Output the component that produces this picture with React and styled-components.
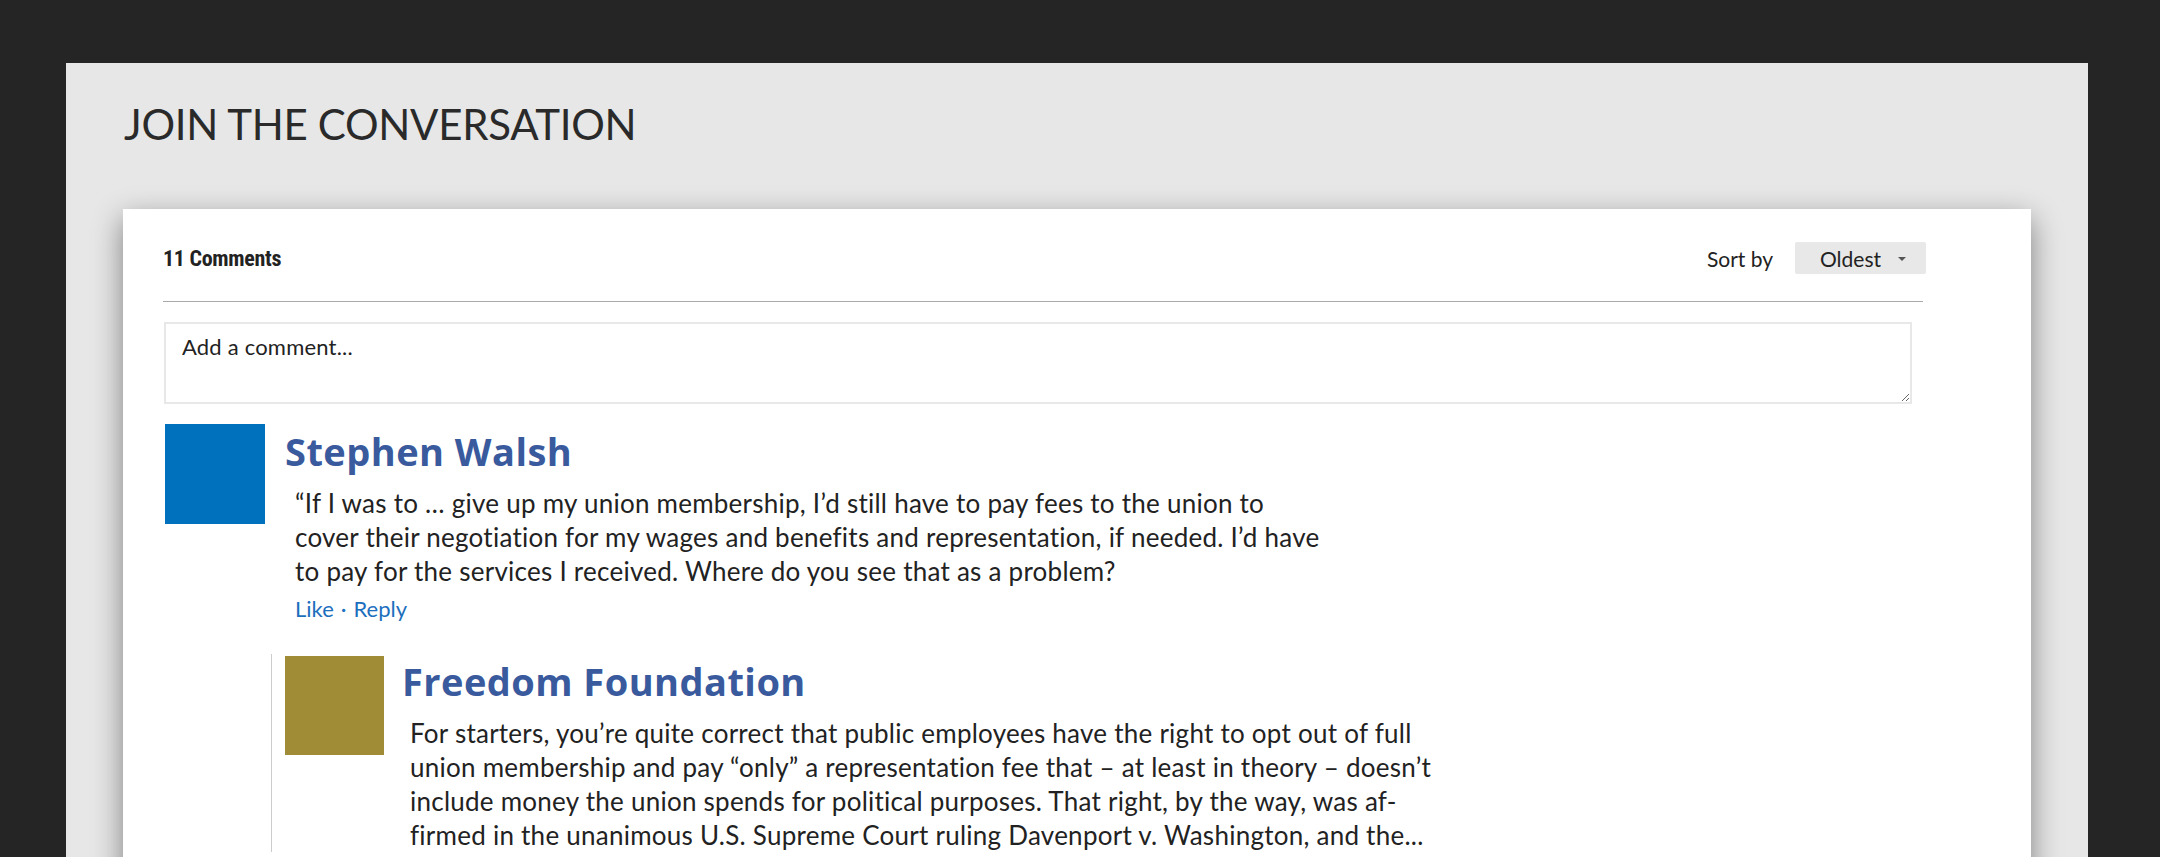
import React from "react";
import styled, { createGlobalStyle } from "styled-components";

const GlobalStyle = createGlobalStyle`
  html, body {
    margin: 0;
    padding: 0;
    background: #252525;
    overflow: hidden;
  }
  * {
    box-sizing: border-box;
  }
`;

const Page = styled.div`
  padding: 63px 72px 0 66px;
  min-height: 857px;
`;

const Panel = styled.section`
  background: #e7e7e7;
  padding: 40px 57px 0 57px;
  min-height: 794px;
`;

const Title = styled.h1`
  margin: 0 0 64px 1px;
  font-family: Lato, "Open Sans", sans-serif;
  font-weight: 400;
  font-size: 42px;
  line-height: 1;
  color: #2a2a2a;
  letter-spacing: -0.3px;
`;

const Card = styled.div`
  background: #fff;
  padding: 33px 108px 60px 40px;
  box-shadow: 0 10px 28px rgba(0, 0, 0, 0.45);
`;

const Header = styled.div`
  display: flex;
  align-items: center;
  justify-content: space-between;
  padding-bottom: 27px;
  border-bottom: 1px solid #aaa;
`;

const Count = styled.div`
  font-family: "Liberation Sans Narrow", "Roboto Condensed", "Liberation Sans", sans-serif;
  font-weight: 700;
  font-size: 22px;
  color: #222;
  letter-spacing: -0.3px;
`;

const Sort = styled.div`
  display: flex;
  align-items: center;
  gap: 22px;
  font-family: Lato, sans-serif;
  font-size: 21px;
  color: #222;
`;

const Dropdown = styled.div`
  display: flex;
  align-items: center;
  justify-content: space-between;
  width: 131px;
  height: 32px;
  margin-right: -3px;
  padding: 0 20px 0 25px;
  background: #e8e8e8;
  border-radius: 2px;
`;

const Caret = styled.span`
  width: 0;
  height: 0;
  border-left: 4px solid transparent;
  border-right: 4px solid transparent;
  border-top: 4px solid #555;
  margin-top: 2px;
`;

const CommentBox = styled.textarea`
  display: block;
  width: 1748px;
  height: 82px;
  margin: 20px 0 20px 1px;
  padding: 10px 16px;
  border: 2px solid #e8e8e8;
  outline: none;
  font-family: Lato, sans-serif;
  font-size: 22px;
  line-height: 26px;
  letter-spacing: 0.2px;
  color: #222;
  &::placeholder {
    color: #222;
    opacity: 1;
  }
`;

const Comment = styled.div`
  margin-left: ${(p) => (p.$reply ? 0 : 2)}px;
`;

const Row = styled.div`
  display: grid;
  grid-template-columns: ${(p) => (p.$reply ? 99 : 100)}px 1fr;
  column-gap: ${(p) => (p.$reply ? 18 : 20)}px;
  align-items: start;
`;

const Avatar = styled.div`
  width: ${(p) => (p.$reply ? 99 : 100)}px;
  height: ${(p) => (p.$reply ? 99 : 100)}px;
  background: ${(p) => p.$color};
`;

const Body = styled.div`
  padding-top: ${(p) => (p.$reply ? 5 : 7)}px;
`;

const Name = styled.div`
  font-family: "Open Sans", sans-serif;
  font-weight: 700;
  font-size: 38px;
  line-height: 40px;
  color: #3a5a9e;
  letter-spacing: 0.45px;
`;

const Text = styled.p`
  margin: 15px 0 0 ${(p) => (p.$reply ? 8 : 10)}px;
  font-family: Lato, sans-serif;
  font-size: 26px;
  line-height: 34px;
  letter-spacing: 0.25px;
  color: #222;
  white-space: nowrap;
`;

const Actions = styled.div`
  margin: 7px 0 0 10px;
  font-family: Lato, sans-serif;
  font-size: 22px;
  line-height: 28px;
  color: #1c6fbd;
  span {
    margin: 0 7px;
  }
`;

const Replies = styled.div`
  margin: 31px 0 0 106px;
  padding: 2px 0 0 13px;
  border-left: 1px solid #ccc;
`;

export default function App() {
  return (
    <>
      <GlobalStyle />
      <Page>
        <Panel>
          <Title>JOIN THE CONVERSATION</Title>
          <Card>
            <Header>
              <Count>11 Comments</Count>
              <Sort>
                Sort by
                <Dropdown>
                  Oldest
                  <Caret />
                </Dropdown>
              </Sort>
            </Header>
            <CommentBox placeholder="Add a comment..." />
            <Comment>
              <Row>
                <Avatar $color="#0071bd" />
                <Body>
                  <Name>Stephen Walsh</Name>
                  <Text>
                    “If I was to … give up my union membership, I’d still have to pay fees to the union to
                    <br />
                    cover their negotiation for my wages and benefits and representation, if needed. I’d have
                    <br />
                    to pay for the services I received. Where do you see that as a problem?
                  </Text>
                  <Actions>
                    Like<span>·</span>Reply
                  </Actions>
                </Body>
              </Row>
              <Replies>
                <Comment $reply>
                  <Row $reply>
                    <Avatar $reply $color="#a08b37" />
                    <Body $reply>
                      <Name>Freedom Foundation</Name>
                      <Text $reply>
                        For starters, you’re quite correct that public employees have the right to opt out of full
                        <br />
                        union membership and pay “only” a representation fee that – at least in theory – doesn’t
                        <br />
                        include money the union spends for political purposes. That right, by the way, was af-
                        <br />
                        firmed in the unanimous U.S. Supreme Court ruling Davenport v. Washington, and the...
                      </Text>
                    </Body>
                  </Row>
                </Comment>
              </Replies>
            </Comment>
          </Card>
        </Panel>
      </Page>
    </>
  );
}
